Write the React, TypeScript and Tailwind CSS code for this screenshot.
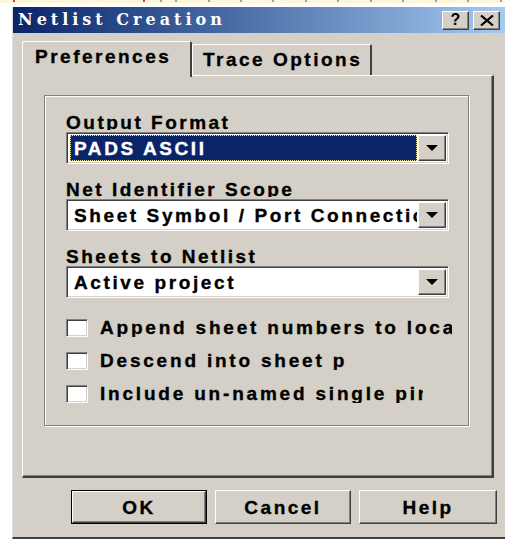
import { ReactNode } from 'react';

const RAISED =
  'border border-t-white border-l-white border-r-[#404040] border-b-[#404040] shadow-[inset_-1px_-1px_0_#808080]';
const SUNKEN =
  'border border-t-[#808080] border-l-[#808080] border-r-white border-b-white shadow-[inset_1px_1px_0_#404040,inset_-1px_-1px_0_#d4d0c8]';

// heavier strokes, like the scaled bitmap dialog font
const HEAVY = '[-webkit-text-stroke:0.35px_currentColor]';

function Ruler() {
  // thin strip of the editor ruler peeking out above the dialog
  const ticks = [13, 143, 160, 175, 208, 240, 272, 305, 337, 370, 402, 435, 467, 500];
  return (
    <div className="relative h-[7px] w-full bg-white">
      <div className="h-[3px] w-full bg-[#fbf7d8]" />
      <svg className="absolute left-0 top-0" width="505" height="4">
        {ticks.map((x, i) => (
          <rect key={i} x={x} y={0} width={2} height={2} fill={i < 2 ? '#d04040' : '#a0a0b0'} />
        ))}
      </svg>
    </div>
  );
}

function CaptionButton({ children }: { children: ReactNode }) {
  return (
    <div className={`flex h-[19px] w-[27px] items-center justify-center bg-[#d4d0c8] ${RAISED}`}>
      {children}
    </div>
  );
}

function TitleBar() {
  return (
    <div className="flex h-[26px] items-center justify-between bg-linear-to-r from-[#0a246a] to-[#a6caf0] pl-[5px] pr-[5px]">
      <span className="font-['DejaVu_Serif',serif] text-[16px] font-bold leading-none tracking-[4px] text-white">
        Netlist Creation
      </span>
      <div className="flex gap-[4px]">
        <CaptionButton>
          <span className="text-[16px] font-bold leading-none text-black">?</span>
        </CaptionButton>
        <CaptionButton>
          <svg width="14" height="11" viewBox="0 0 14 11">
            <path d="M1 0.5 L13 10.5 M13 0.5 L1 10.5" stroke="#000" strokeWidth="2.2" />
          </svg>
        </CaptionButton>
      </div>
    </div>
  );
}

function Label({ text }: { text: string }) {
  return (
    <div
      className={`h-[17px] overflow-hidden whitespace-nowrap text-[19px] font-bold leading-[19px] tracking-[2.5px] text-black ${HEAVY}`}
    >
      {text}
    </div>
  );
}

function Combo({ value, selected }: { value: string; selected?: boolean }) {
  return (
    <div className={`mt-[2px] flex h-[32px] w-[383px] bg-white p-[2px] ${SUNKEN}`}>
      <div className="flex min-w-0 flex-1 pl-[1px] pr-[1px]">
        <div
          className={`flex min-w-0 flex-1 items-center overflow-hidden whitespace-nowrap pl-[4px] text-[19px] font-bold leading-none tracking-[2.6px] ${HEAVY} ${
            selected
              ? 'bg-[#0a246a] text-white outline-1 -outline-offset-1 outline-dotted outline-[#efe3a0]'
              : 'text-black'
          }`}
        >
          {value}
        </div>
      </div>
      <div className={`flex h-[26px] w-[28px] shrink-0 items-center justify-center bg-[#d4d0c8] ${RAISED}`}>
        <svg width="12" height="6" viewBox="0 0 12 6">
          <path d="M0 0 H12 L6 6 Z" fill="#000" />
        </svg>
      </div>
    </div>
  );
}

function Check({ text, width }: { text: string; width: number }) {
  return (
    <div className="flex h-[18px] items-center gap-[12px]">
      <div className={`h-[18px] w-[22px] shrink-0 bg-white ${SUNKEN}`} />
      <div
        className={`overflow-hidden whitespace-nowrap text-[19px] font-bold leading-[18px] tracking-[2.8px] text-black ${HEAVY}`}
        style={{ width }}
      >
        {text}
      </div>
    </div>
  );
}

function PushButton({ label, isDefault, w }: { label: string; isDefault?: boolean; w: string }) {
  return (
    <div className={`${w} h-[34px] ${isDefault ? 'border border-black' : ''}`}>
      <div
        className={`flex h-full w-full items-center justify-center bg-[#d4d0c8] text-[19px] font-bold leading-none tracking-[2.5px] text-black ${HEAVY} ${RAISED}`}
      >
        {label}
      </div>
    </div>
  );
}

export default function App() {
  return (
    <div className="h-[539px] w-[505px] overflow-hidden bg-white font-['Liberation_Sans',Arial,sans-serif]">
      <Ruler />
      <div className="ml-[12px] flex h-[532px] w-[493px] flex-col border-b-2 border-l border-b-[#404040] border-l-[#dfdfdf] bg-[#d4d0c8]">
        <TitleBar />

        <div className="flex flex-1 flex-col pl-[9px] pt-[8px]">
          {/* tab strip */}
          <div className="flex h-[34px] items-start">
            <div
              className={`relative z-10 h-[36px] w-[170px] rounded-t-[2px] border-l border-r-2 border-t border-l-white border-r-[#404040] border-t-white bg-[#d4d0c8] pl-[12px] pt-[5px] text-[19px] font-bold leading-[19px] tracking-[2.5px] text-black ${HEAVY}`}
            >
              Preferences
            </div>
            <div
              className={`mt-[3px] h-[31px] w-[180px] rounded-t-[2px] border-l border-r-2 border-t border-l-white border-r-[#404040] border-t-white pl-[10px] pt-[5px] text-[19px] font-bold leading-[19px] tracking-[2.5px] text-black ${HEAVY}`}
            >
              Trace Options
            </div>
          </div>

          {/* tab page */}
          <div className="h-[403px] w-[472px] border-b-2 border-l border-r-2 border-t border-b-[#404040] border-l-white border-r-[#404040] border-t-white pl-[21px] pt-[19px] shadow-[inset_-1px_-1px_0_#808080]">
            <div className="h-[331px] w-[425px] border border-[#808080] pl-[21px] pt-[17px] shadow-[inset_1px_1px_0_white,1px_1px_0_white]">
              <Label text="Output Format" />
              <Combo value="PADS ASCII" selected />

              <div className="mt-[16px]">
                <Label text="Net Identifier Scope" />
                <Combo value="Sheet Symbol / Port Connections" />
              </div>

              <div className="mt-[16px]">
                <Label text="Sheets to Netlist" />
                <Combo value="Active project" />
              </div>

              <div className="mt-[21px] flex flex-col gap-[15px]">
                <Check text="Append sheet numbers to local net names" width={352} />
                <Check text="Descend into sheet parts" width={247} />
                <Check text="Include un-named single pin nets" width={323} />
              </div>
            </div>
          </div>

          {/* dialog buttons */}
          <div className="ml-[49px] mt-[12px] flex gap-[8px]">
            <PushButton label="OK" isDefault w="w-[136px]" />
            <PushButton label="Cancel" w="w-[136px]" />
            <PushButton label="Help" w="w-[138px]" />
          </div>
        </div>
      </div>
    </div>
  );
}
